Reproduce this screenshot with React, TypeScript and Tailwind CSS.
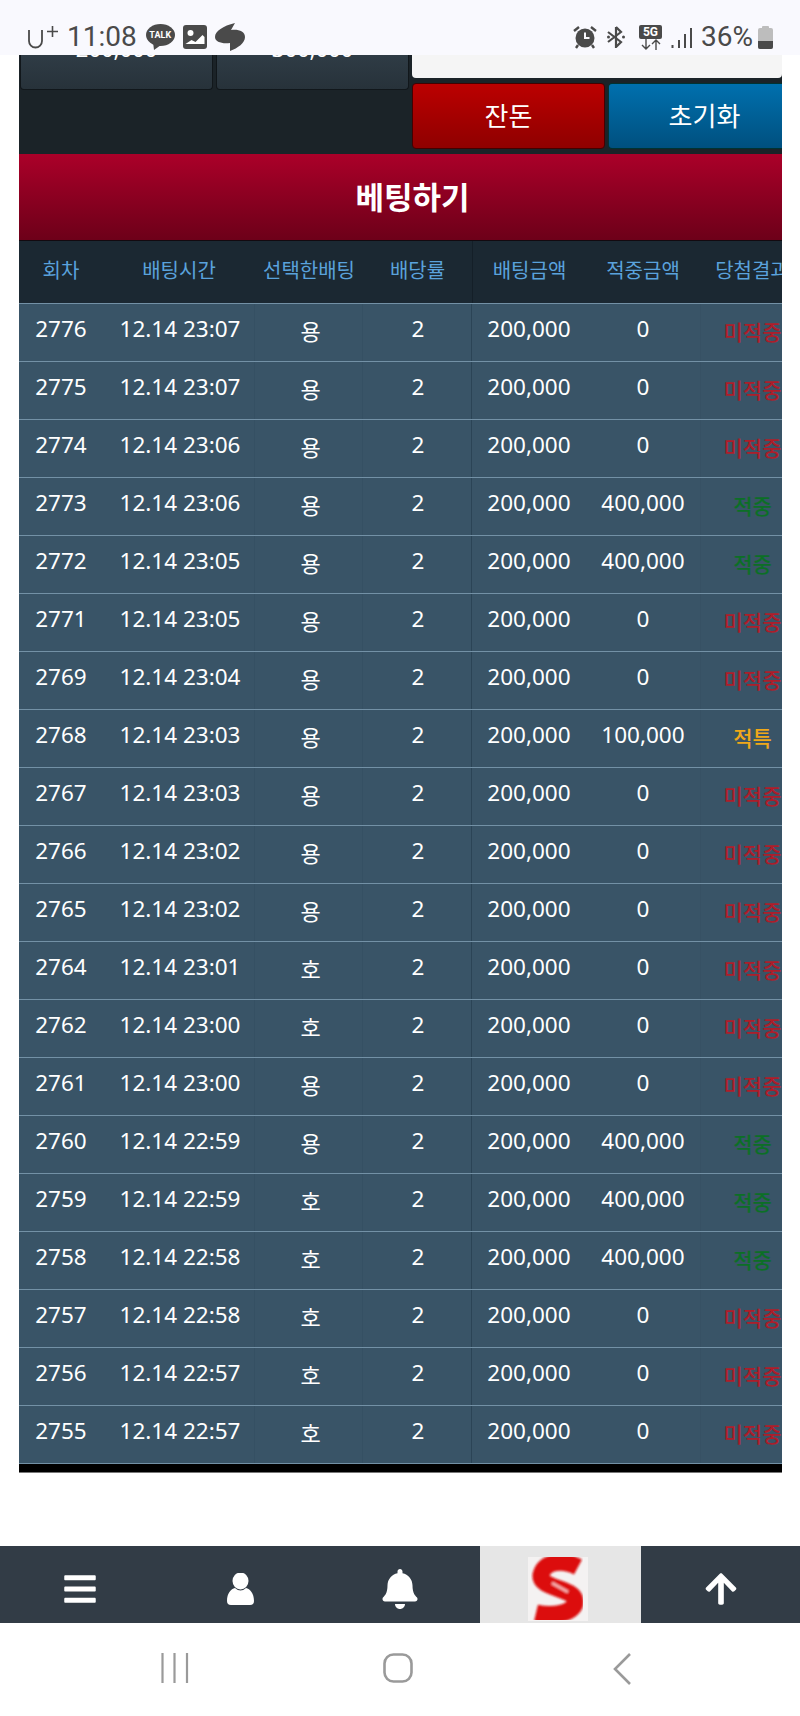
import { FaArrowUp, FaBars, FaBell } from 'react-icons/fa';

type Row = [string, string, string, string, string];

const rows: Row[] = [
  ['2776', '12.14 23:07', '용', '0', '미적중'],
  ['2775', '12.14 23:07', '용', '0', '미적중'],
  ['2774', '12.14 23:06', '용', '0', '미적중'],
  ['2773', '12.14 23:06', '용', '400,000', '적중'],
  ['2772', '12.14 23:05', '용', '400,000', '적중'],
  ['2771', '12.14 23:05', '용', '0', '미적중'],
  ['2769', '12.14 23:04', '용', '0', '미적중'],
  ['2768', '12.14 23:03', '용', '100,000', '적특'],
  ['2767', '12.14 23:03', '용', '0', '미적중'],
  ['2766', '12.14 23:02', '용', '0', '미적중'],
  ['2765', '12.14 23:02', '용', '0', '미적중'],
  ['2764', '12.14 23:01', '호', '0', '미적중'],
  ['2762', '12.14 23:00', '호', '0', '미적중'],
  ['2761', '12.14 23:00', '용', '0', '미적중'],
  ['2760', '12.14 22:59', '용', '400,000', '적중'],
  ['2759', '12.14 22:59', '호', '400,000', '적중'],
  ['2758', '12.14 22:58', '호', '400,000', '적중'],
  ['2757', '12.14 22:58', '호', '0', '미적중'],
  ['2756', '12.14 22:57', '호', '0', '미적중'],
  ['2755', '12.14 22:57', '호', '0', '미적중'],
];

const headers = ['회차', '배팅시간', '선택한배팅', '배당률', '배팅금액', '적중금액', '당첨결과'];

const resultColor = (r: string) => {
  if (r === '적중') return 'text-[#0c6f26]';
  if (r === '적특') return 'text-[#f0a818]';
  return 'text-[#ad1d2a]';
};

function StatusBar() {
  return (
    <div className="absolute top-0 left-0 z-10 flex h-[55px] w-[800px] items-start justify-between bg-[#f9f9fe] pt-[23px] pr-[27px] pl-[28px] text-[#4a4a4a]">
      <div className="flex items-center">
        <svg width="15" height="22" viewBox="0 0 15 22" className="mt-[3px]">
          <path d="M1 2v11a6.5 6.5 0 0 0 13 0V2" fill="none" stroke="#4a4a4a" strokeWidth="1.8" />
        </svg>
        <svg width="11" height="11" viewBox="0 0 11 11" className="mb-[12px] ml-[4px]">
          <path d="M5.5 0v11M0 5.5h11" stroke="#4a4a4a" strokeWidth="1.6" />
        </svg>
        <span className="ml-[9px] text-[28px] leading-[28px] font-['Roboto']">11:08</span>
        <div className="relative ml-[9px] h-[26px] w-[29px]">
          <svg width="29" height="26" viewBox="0 0 29 26">
            <ellipse cx="14.5" cy="11" rx="14.5" ry="11" fill="#4a4a4a" />
            <path d="M7 18l1 8 7-5z" fill="#4a4a4a" />
          </svg>
          <span className="absolute top-[5px] left-0 w-full text-center text-[9px] leading-[12px] font-bold text-white font-['Roboto']">TALK</span>
        </div>
        <svg width="24" height="24" viewBox="0 0 24 24" className="ml-[8px]">
          <rect width="24" height="24" rx="3" fill="#4a4a4a" />
          <circle cx="7.5" cy="8" r="3" fill="#fff" />
          <path d="M2.5 19l6-4 4 2 7-7 2 2v7h-19z" fill="#fff" />
        </svg>
        <svg width="30" height="28" viewBox="0 0 30 28" className="ml-[8px]">
          <path d="M20 0C8 3 0 8 0 14c0 5 7 7 15 6v8c8-3 15-8 15-14 0-6-7-8-14-7z" fill="#4a4a4a" />
        </svg>
      </div>
      <div className="flex items-center">
        <svg width="24" height="24" viewBox="0 0 24 24">
          <circle cx="12" cy="13" r="9.5" fill="#4a4a4a" />
          <path d="M12 7.5V13h4.5" fill="none" stroke="#f9f9fe" strokeWidth="2" />
          <path d="M1 6l5-4M23 6l-5-4M5 20l-2 3M19 20l2 3" stroke="#4a4a4a" strokeWidth="2.4" />
        </svg>
        <svg width="20" height="22" viewBox="0 0 20 22" className="ml-[9px]">
          <path d="M10 1v20l5-5-13-10M10 1l5 5L2 16" fill="none" stroke="#4a4a4a" strokeWidth="2.2" />
          <circle cx="2.5" cy="11" r="1.5" fill="#4a4a4a" />
          <circle cx="17.5" cy="11" r="1.5" fill="#4a4a4a" />
        </svg>
        <div className="ml-[13px] flex w-[23px] flex-col items-center">
          <div className="h-[14px] w-[23px] rounded-[2px] bg-[#4a4a4a] text-center text-[12px] leading-[14px] font-bold text-white font-['Roboto']">5G</div>
          <svg width="20" height="11" viewBox="0 0 20 11">
            <path d="M5 0v10M1 6l4 4 4-4M15 11V1M11 5l4-4 4 4" fill="none" stroke="#4a4a4a" strokeWidth="1.4" />
          </svg>
        </div>
        <svg width="21" height="20" viewBox="0 0 21 20" className="mt-[2px] ml-[9px]">
          <path d="M1.500 20v-3M8 20v-8M14 20V6M20 20V0" stroke="#4a4a4a" strokeWidth="2" />
        </svg>
        <span className="ml-[9px] text-[28px] leading-[28px] font-['Roboto']">36%</span>
        <div className="relative ml-[5px] h-[23px] w-[15px]">
          <div className="mx-auto h-[2px] w-[7px] rounded-t-[1px] bg-[#bdbdbd]" />
          <div className="h-[21px] w-[15px] rounded-[2px] bg-[#bdbdbd]" />
          <div className="absolute bottom-0 left-0 h-[8px] w-[15px] rounded-b-[2px] bg-[#4a4a4a]" />
        </div>
      </div>
    </div>
  );
}

function TopPanel() {
  return (
    <div className="flex h-[154px] bg-[#1b2328] pl-px">
      <div className="flex h-[90px] gap-[3px]">
        {['200,000', '300,000'].map((v) => (
          <div key={v} className="flex h-[90px] w-[193px] items-end justify-center rounded-b-[4px] border border-t-0 border-[#11171b] bg-linear-to-b from-[#3c4c58] to-[#27323a] pb-[28px] text-[22px] leading-[26px] text-white">
            {v}
          </div>
        ))}
      </div>
      <div className="ml-[3px] flex w-[370px] flex-col">
        <div className="flex h-[78px] items-end rounded-b-[4px] bg-[#f5f5f5] pb-[21px] pl-[12px] text-[24px] leading-[28px] text-[#444]">
          금액입력
        </div>
        <div className="mt-[5px] flex gap-[3px]">
          <button className="h-[66px] w-[193px] rounded-[4px] border border-[#400] bg-linear-to-b from-[#bb0000] to-[#8f0000] text-[26px] text-white">잔돈</button>
          <button className="h-[66px] w-[174px] rounded-l-[4px] border border-r-0 border-[#033] bg-linear-to-b from-[#0070ae] to-[#00507f] pl-[18px] text-[26px] text-white">초기화</button>
        </div>
      </div>
    </div>
  );
}

function BetTable() {
  return (
    <div className="overflow-hidden">
      <div className="grid h-[63px] w-[785px] grid-cols-[84px_152px_108px_109px_114px_114px_104px] border-t border-[#120a10] bg-[#1b2832] text-center text-[20px] text-[#5aa2dc]">
        {headers.map((h, i) => (
          <div key={h} className={`flex items-center justify-center whitespace-nowrap pb-[2px] ${i === 4 ? 'border-l border-[#141f28]' : ''}`}>{h}</div>
        ))}
      </div>
      {rows.map((r) => (
        <div key={r[0]} className="grid h-[58px] w-[785px] grid-cols-[84px_152px_108px_109px_114px_114px_104px] items-center border-t border-[#7391a6] bg-[#395467] text-center text-[22.5px] text-white">
          <div className="pb-[7px]">{r[0]}</div>
          <div className="h-full border-r border-[#355063] pt-[8px] pl-[3px] whitespace-nowrap">{r[1]}</div>
          <div className="h-full border-r border-[#355063] pt-[11px] pl-[4px] text-[22px]">{r[2]}</div>
          <div className="flex h-full items-center justify-center border-r border-[#2b4456] pb-[7px] pl-[2px]">2</div>
          <div className="pb-[7px]">200,000</div>
          <div className="pb-[7px]">{r[3]}</div>
          <div className={`${resultColor(r[4])} flex h-full items-center justify-center border-l border-[#375164] text-[21px] font-medium whitespace-nowrap`}>{r[4]}</div>
        </div>
      ))}
    </div>
  );
}

function BottomNav() {
  return (
    <div className="grid h-[77px] grid-cols-[160px_160px_160px_161px_159px] bg-[#323c46] text-white">
      <div className="flex items-center justify-center pt-[9px]"><FaBars size={36} /></div>
      <div className="flex items-center justify-center pt-[9px]">
        <svg width="27" height="32" viewBox="0 0 27 32" fill="#fff">
          <ellipse cx="13.5" cy="8" rx="8" ry="8.500" />
          <path d="M0 28c0-8 4-12 8-13q5.500 5 11 0c4 1 8 5 8 13q0 4-4 4H4q-4 0-4-4z" />
        </svg>
      </div>
      <div className="flex items-center justify-center pt-[9px]"><FaBell size={40} /></div>
      <div className="flex items-center justify-center bg-[#e6e6e6]">
        <svg width="60" height="64" viewBox="0 0 60 64" className="mt-[8px] mr-[6px]">
          <defs>
            <filter id="logoBlur">
              <feGaussianBlur stdDeviation="0.9" />
            </filter>
          </defs>
          <rect width="60" height="64" fill="#f4f2f2" />
          <g filter="url(#logoBlur)" fill="none">
            <path d="M50 10C35 2 16 4 13 18c-2 14 33 12 34 26 1 12-22 16-39 12" stroke="#dc1010" strokeWidth="17" />
            <path d="M24 26l16 9" stroke="#f6b0b0" strokeWidth="3" />
          </g>
        </svg>
      </div>
      <div className="flex items-center justify-center pt-[9px]"><FaArrowUp size={36} /></div>
    </div>
  );
}

function SystemNav() {
  return (
    <div className="flex h-[94px] items-start pt-[30px]">
      <svg width="28" height="30" viewBox="0 0 28 30" className="ml-[161px]">
        <path d="M1.500 0v30M13.500 0v30M26 0v30" stroke="#9a9a9a" strokeWidth="2.2" />
      </svg>
      <svg width="30" height="30" viewBox="0 0 30 30" className="ml-[194px]">
        <rect x="1.500" y="1.500" width="27" height="27" rx="9" fill="none" stroke="#9a9a9a" strokeWidth="2.6" />
      </svg>
      <svg width="18" height="32" viewBox="0 0 18 32" className="ml-[200px]">
        <path d="M17 1L2 16l15 15" fill="none" stroke="#9a9a9a" strokeWidth="2.6" />
      </svg>
    </div>
  );
}

export default function App() {
  return (
    <div className="relative h-[1716px] w-[800px] overflow-hidden bg-white font-['Noto_Sans','Noto_Sans_CJK_KR',sans-serif]">
      <StatusBar />
      <div className="ml-[19px] w-[763px]">
        <TopPanel />
        <div className="flex h-[86px] items-center justify-center bg-linear-to-b from-[#ab0029] to-[#6d0019] pl-[24px] text-[31px] font-bold text-white">
          베팅하기
        </div>
        <BetTable />
        <div className="h-[10px] border-t border-b border-t-[#7391a6] border-b-[#777] bg-black" />
      </div>
      <div className="h-[73px]" />
      <BottomNav />
      <SystemNav />
    </div>
  );
}
